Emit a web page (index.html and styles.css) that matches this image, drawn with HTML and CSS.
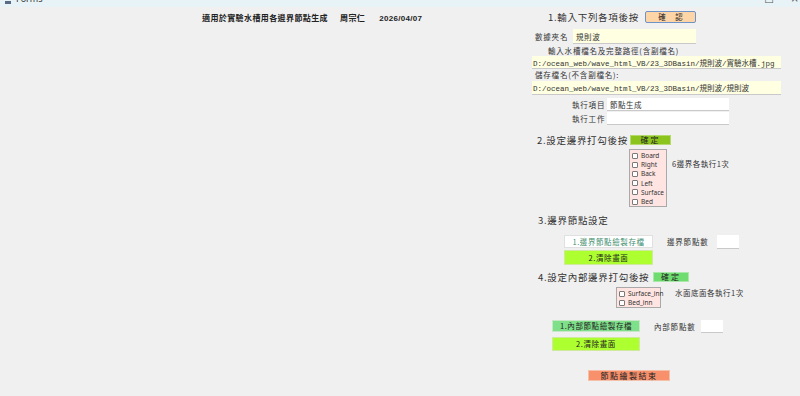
FILE: index.html
```html
<!DOCTYPE html>
<html lang="zh-Hant">
<head>
<meta charset="utf-8">
<title>Forms</title>
<link rel="stylesheet" href="styles.css">
</head>
<body>
<div class="titlebar">
  <div class="app"><span class="app-icon"></span><span class="app-name">Forms</span></div>
  <div class="controls"><span class="ctl ctl-min">–</span><span class="ctl ctl-max">□</span><span class="ctl ctl-close">×</span></div>
</div>
<div class="form">
  <div class="left">
    <div class="headline">適用於實驗水槽用各邊界節點生成<span class="gap1">周宗仁</span><span class="gap2">2026/04/07</span></div>
  </div>
  <div class="panel">
    <div class="row r1"><span class="head w97">1.輸入下列各項後按</span><button class="btn btn-confirm">確 認</button></div>
    <div class="row r2"><span class="lbl w38">數據夾名</span><span class="field yellow f-folder">規則波</span></div>
    <div class="row r3"><span class="lbl">輸入水槽檔名及完整路徑(含副檔名)</span></div>
    <div class="row r4"><span class="field yellow path">D:/ocean_web/wave_html_VB/23_3DBasin/規則波/實驗水槽.jpg</span></div>
    <div class="row r5"><span class="lbl">儲存檔名(不含副檔名):</span></div>
    <div class="row r6"><span class="field yellow path">D:/ocean_web/wave_html_VB/23_3DBasin/規則波/規則波</span></div>
    <div class="row r7"><span class="lbl w35">執行項目</span><span class="field white f-exec">節點生成</span></div>
    <div class="row r8"><span class="lbl w35">執行工作</span><span class="field white f-exec"></span></div>
    <div class="row r9"><span class="head w93">2.設定邊界打勾後按</span><button class="btn btn-ok1">確定</button></div>
    <div class="row r10">
      <div class="group g6">
        <label class="chk"><input type="checkbox">Board</label>
        <label class="chk"><input type="checkbox">Right</label>
        <label class="chk"><input type="checkbox">Back</label>
        <label class="chk"><input type="checkbox">Left</label>
        <label class="chk"><input type="checkbox">Surface</label>
        <label class="chk"><input type="checkbox">Bed</label>
      </div>
      <span class="note n6">6邊界各執行1次</span>
    </div>
    <div class="row r11"><span class="head">3.邊界節點設定</span></div>
    <div class="row r12"><button class="btn btn-save">1.邊界節點繪製存檔</button><span class="lbl w50 ml14">邊界節點數</span><span class="field white f-num"></span></div>
    <div class="row r13"><button class="btn btn-clear b3">2.清除畫面</button></div>
    <div class="row r14"><span class="head w115">4.設定內部邊界打勾後按</span><button class="btn btn-ok2">確定</button></div>
    <div class="row r15">
      <div class="group g2">
        <label class="chk"><input type="checkbox">Surface_inn</label>
        <label class="chk"><input type="checkbox">Bed_inn</label>
      </div>
      <span class="note n2">水面底面各執行1次</span>
    </div>
    <div class="row r16"><button class="btn btn-inner">1.內部節點繪製存檔</button><span class="lbl w47 ml14">內部節點數</span><span class="field white f-num2"></span></div>
    <div class="row r17"><button class="btn btn-clear b4">2.清除畫面</button></div>
    <div class="row r18"><button class="btn btn-end">節點繪製結束</button></div>
  </div>
</div>
</body>
</html>
```

FILE: styles.css
```css
* { box-sizing: border-box; }
html, body { margin: 0; padding: 0; }
body {
  width: 800px;
  height: 396px;
  overflow: hidden;
  background: #f0f0f0;
  color: #222;
  font-family: "Noto Sans CJK TC", "Noto Sans", sans-serif;
}

.titlebar {
  height: 7px;
  background: #e7f3f7;
  display: flex;
  justify-content: space-between;
  overflow: hidden;
}
.app { display: flex; align-items: flex-end; padding-left: 5px; height: 4px; }
.app-icon { width: 6px; height: 3px; background: #5a6b88; margin-right: 5px; }
.app-name { font-family: "Noto Sans", sans-serif; font-size: 9px; line-height: 9px; color: #333; margin-top: -6px; align-self: flex-start; }
.controls { display: flex; height: 7px; overflow: hidden; }
.ctl { font-family: "DejaVu Sans", sans-serif; font-size: 10px; line-height: 10px; color: #555; margin-top: -6px; }
.ctl-min { margin-right: 18px; }
.ctl-max { margin-right: 17px; }
.ctl-close { margin-right: 1px; }

.form { display: flex; }
.left { width: 532px; padding: 6px 0 0 202px; }
.headline {
  font-size: 8px;
  line-height: 10px;
  font-weight: 700;
  letter-spacing: 0.4px;
  white-space: nowrap;
}
.gap1 { margin-left: 12px; }
.gap2 { margin-left: 14px; font-family: "Liberation Sans", sans-serif; letter-spacing: 0.3px; }

.panel { width: 268px; display: flex; flex-direction: column; }
.row { display: flex; align-items: center; white-space: nowrap; }

.head { font-size: 9.5px; letter-spacing: 0.7px; line-height: 10px; color: #333; }
.lbl { font-size: 7.5px; letter-spacing: 0.8px; line-height: 9px; color: #333; }
.note { font-size: 7.5px; letter-spacing: 0.5px; line-height: 9px; color: #333; }
.w97 { width: 97px; flex-shrink: 0; }
.w93 { width: 93px; flex-shrink: 0; }
.w115 { width: 115px; flex-shrink: 0; }
.w38 { width: 38px; }
.w35 { width: 35px; }
.w50 { width: 50px; }
.w47 { width: 47px; }
.ml14 { margin-left: 14px; }

.field {
  display: flex;
  align-items: center;
  height: 100%;
  padding-left: 3px;
  font-size: 7.5px;
  color: #333;
  box-shadow: 0 1px 0 #c9c9c9;
}
.yellow { background: #ffffe1; }
.white { background: #ffffff; }
.path { width: 249px; font-family: "Liberation Mono", "Noto Sans CJK TC", monospace; font-size: 7.5px; padding-left: 1px; }
.f-folder { width: 123px; letter-spacing: 0.6px; }
.f-exec { width: 122px; align-items: flex-start; padding-top: 1px; letter-spacing: 0.5px; }
.f-num { width: 22px; }
.f-num2 { width: 22px; }

.btn {
  font-family: "Noto Sans CJK TC", sans-serif;
  font-size: 7.5px;
  line-height: 1;
  letter-spacing: 0.6px;
  color: #222;
  border: 1px solid #d8d8d8;
  padding: 0;
  margin: 0;
  height: 100%;
  display: flex;
  align-items: center;
  justify-content: center;
  flex-shrink: 0;
}
.btn-confirm { width: 51px; background: #fdd5a6; border: 1px solid #6f93c9; border-radius: 2px; letter-spacing: 4px; padding-left: 4px; }
.btn-ok1 { width: 41px; background: #8cc41e; border-color: #b5d96a; font-size: 8px; letter-spacing: 2px; }
.btn-ok2 { width: 36px; background: #6fdc6f; border-color: #a8e8a8; font-size: 8px; letter-spacing: 2px; }
.btn-save { width: 89px; background: #ffffff; color: #3f8f70; border-color: #e0e0e0; }
.btn-clear { background: #adff2f; border-color: #cfe99e; }
.b3 { width: 89px; }
.b4 { width: 88px; }
.btn-inner { width: 88px; background: #7fe08a; border-color: #c6e8c6; }
.btn-end { width: 82px; background: #f8906c; border-color: #f5c0aa; font-size: 8px; letter-spacing: 1.5px; }

.group {
  display: flex;
  flex-direction: column;
  background: #ffe4e1;
  border: 1px solid #a9a9a9;
  height: 100%;
  padding: 1px 0 0 2px;
  flex-shrink: 0;
}
.chk {
  display: flex;
  align-items: center;
  font-family: "Noto Sans", "Open Sans", sans-serif;
  font-size: 6.5px;
  line-height: 9.2px;
  height: 9.2px;
  color: #333;
  white-space: nowrap;
}
.chk input {
  appearance: none;
  -webkit-appearance: none;
  flex: 0 0 6px;
  width: 6px;
  height: 6px;
  margin: 0 3px 0 0;
  border: 1px solid #7a7a7a;
  border-radius: 1px;
  background: #fff;
}
.g6 { width: 38px; }
.g2 { width: 45px; padding-top: 1px; }
.n6 { align-self: flex-start; margin: 10px 0 0 5px; }
.n2 { align-self: flex-start; margin: 1px 0 0 14px; }

.r1 { height: 12px; margin-top: 4px; padding-left: 16px; }
.r2 { height: 14px; margin-top: 6px; padding-left: 3px; }
.r3 { height: 10px; margin-top: 2px; padding-left: 16px; }
.r4 { height: 12px; margin-top: 1px; }
.r5 { height: 9px; margin-top: 2px; padding-left: 3px; }
.r6 { height: 13px; margin-top: 2px; }
.r7 { height: 12px; margin-top: 4px; padding-left: 40px; }
.r8 { height: 12px; margin-top: 2px; padding-left: 40px; }
.r9 { height: 10px; margin-top: 11px; padding-left: 5px; }
.r10 { height: 58px; margin-top: 4px; padding-left: 97px; align-items: stretch; }
.r11 { height: 10px; margin-top: 8px; padding-left: 6px; }
.r12 { height: 13px; margin-top: 10px; padding-left: 32px; }
.r13 { height: 15px; margin-top: 2px; padding-left: 32px; }
.r14 { height: 10px; margin-top: 7px; padding-left: 6px; }
.r15 { height: 21px; margin-top: 5px; padding-left: 84px; align-items: stretch; }
.r16 { height: 12px; margin-top: 12px; padding-left: 20px; }
.r17 { height: 14px; margin-top: 5px; padding-left: 20px; }
.r18 { height: 11px; margin-top: 19px; padding-left: 56px; }
```
